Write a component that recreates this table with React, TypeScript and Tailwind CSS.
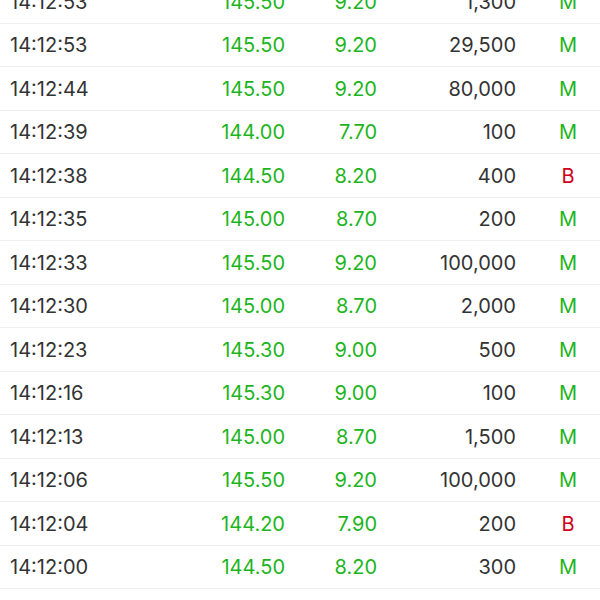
const trades: [string, string, string, string, "M" | "B"][] = [
  ["14:12:53", "145.50", "9.20", "1,300", "M"],
  ["14:12:53", "145.50", "9.20", "29,500", "M"],
  ["14:12:44", "145.50", "9.20", "80,000", "M"],
  ["14:12:39", "144.00", "7.70", "100", "M"],
  ["14:12:38", "144.50", "8.20", "400", "B"],
  ["14:12:35", "145.00", "8.70", "200", "M"],
  ["14:12:33", "145.50", "9.20", "100,000", "M"],
  ["14:12:30", "145.00", "8.70", "2,000", "M"],
  ["14:12:23", "145.30", "9.00", "500", "M"],
  ["14:12:16", "145.30", "9.00", "100", "M"],
  ["14:12:13", "145.00", "8.70", "1,500", "M"],
  ["14:12:06", "145.50", "9.20", "100,000", "M"],
  ["14:12:04", "144.20", "7.90", "200", "B"],
  ["14:12:00", "144.50", "8.20", "300", "M"],
  ["14:11:58", "144.50", "8.20", "100", "M"],
];

export default function App() {
  return (
    <div className="h-[600px] w-[600px] overflow-hidden bg-white font-['Inter',sans-serif] text-[20px]">
      <div className="mt-[-20px]">
        {trades.map(([time, price, change, vol, side], i) => (
          <div key={i} className="flex h-[43.5px] items-center border-b border-[#eeeeee] pt-[1px]">
            <span className="w-[200px] pl-[10px] text-[#333333]">{time}</span>
            <span className="w-[85px] text-right text-[#1db51d]">{price}</span>
            <span className="w-[92px] text-right text-[#1db51d]">{change}</span>
            <span className="w-[139px] text-right text-[#333333]">{vol}</span>
            <span className={side === "B" ? "ml-[40px] w-[24px] text-center text-[#d0021b]" : "ml-[40px] w-[24px] text-center text-[#1db51d]"}>
              {side}
            </span>
          </div>
        ))}
      </div>
    </div>
  );
}
